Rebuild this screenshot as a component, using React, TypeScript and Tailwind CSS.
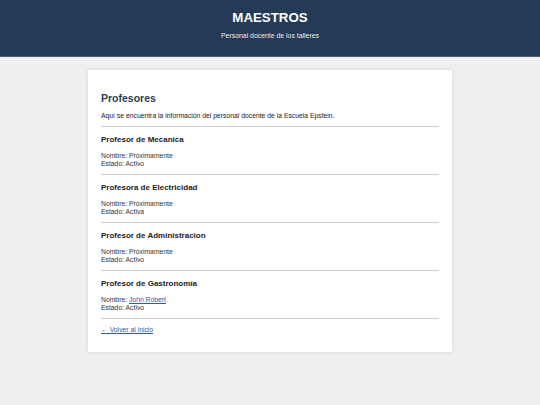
import React from "react";

const items = [
  { t: "Profesor de Mecanica", n: "Próximamente", e: "Activo" },
  { t: "Profesora de Electricidad", n: "Próximamente", e: "Activa" },
  { t: "Profesor de Administracion", n: "Próximamente", e: "Activo" },
  { t: "Profesor de Gastronomía", n: "John Robert", e: "Activo", link: true },
];

export default function App() {
  return (
    <div className="min-h-[405px] bg-[#efefef] font-['Liberation_Sans',Arial,sans-serif]">
      <header className="h-[57px] bg-[#253a56] border-b border-[#4d5f77] flex flex-col items-center text-white">
        <h1 className="mt-[10px] text-[13.3px] leading-[16px] font-bold">MAESTROS</h1>
        <p className="mt-[6px] text-[6.9px] leading-[8px] text-[#e8ecf1]">Personal docente de los talleres</p>
      </header>
      <main className="pt-[13px] pb-[20px]">
        <div className="mx-auto w-[364px] bg-white px-[13px] pt-[22px] pb-[18px] shadow-[0_0_4px_rgba(0,0,0,0.12)]">
          <h2 className="text-[10.5px] leading-[13px] font-bold text-[#2c3e55]">Profesores</h2>
          <p className="mt-[7px] text-[6.8px] leading-[8px] text-[#222]">
            Aquí se encuentra la información del personal docente de la Escuela Epstein.
          </p>
          <hr className="mt-[6px] border-t border-[#cfcfcf]" />
          {items.map((it) => (
            <div key={it.t}>
              <h3 className="mt-[8px] text-[8px] leading-[10px] font-bold text-[#222]">{it.t}</h3>
              <p className="mt-[7px] text-[6.8px] leading-[8px] text-[#333]">
                Nombre:{" "}
                {it.link ? (
                  <a href="#" className="text-[#2b5cb0] underline">{it.n}</a>
                ) : (
                  it.n
                )}
                <br />
                Estado: {it.e}
              </p>
              <hr className="mt-[6px] border-t border-[#cfcfcf]" />
            </div>
          ))}
          <a href="#" className="block mt-[7px] text-[6.8px] leading-[8px] text-[#2b5cb0] underline">
            ← Volver al inicio
          </a>
        </div>
      </main>
    </div>
  );
}
